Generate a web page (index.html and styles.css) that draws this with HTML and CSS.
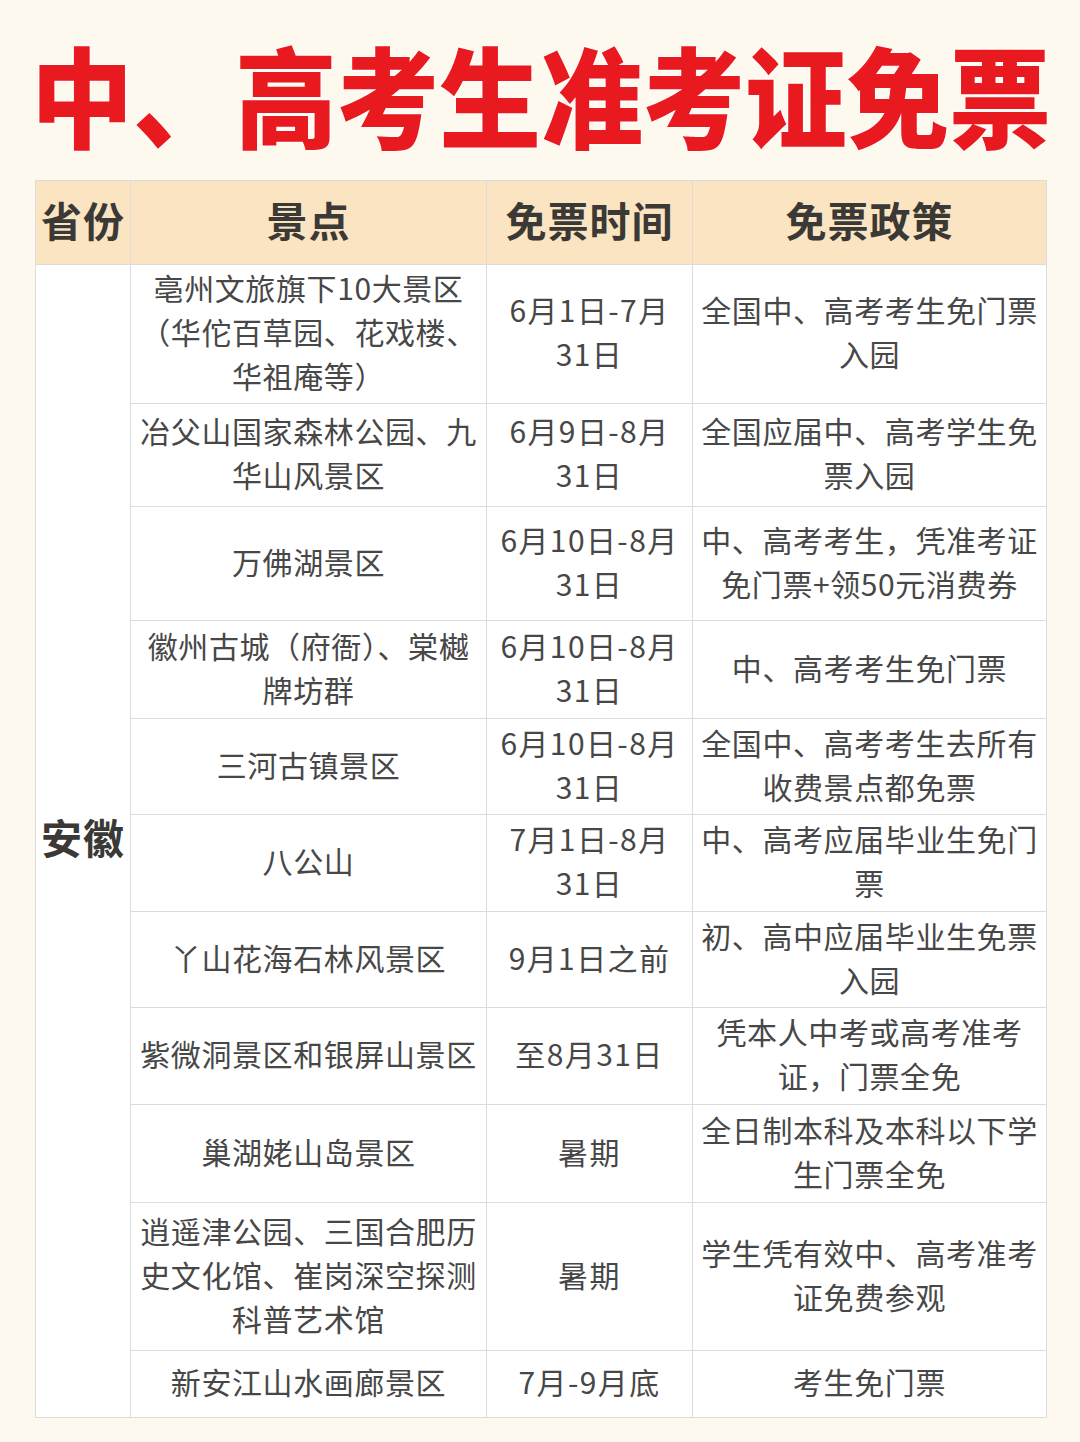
FILE: index.html
```html
<!DOCTYPE html>
<html lang="zh-CN">
<head>
<meta charset="utf-8">
<title>中、高考生准考证免票</title>
<link rel="stylesheet" href="styles.css">
</head>
<body>
<div class="page">
  <h1 class="title"><span class="title-text">中、高考生准考证免票</span></h1>
  <table class="grid">
    <colgroup>
      <col class="c-prov">
      <col class="c-spot">
      <col class="c-time">
      <col class="c-policy">
    </colgroup>
    <thead>
      <tr class="head">
        <th>省份</th>
        <th>景点</th>
        <th>免票时间</th>
        <th>免票政策</th>
      </tr>
    </thead>
    <tbody>
      <tr class="r1">
        <td class="prov" rowspan="11">安徽</td>
        <td>亳州文旅旗下10大景区<br>（华佗百草园、花戏楼、<br>华祖庵等）</td>
        <td class="time">6月1日-7月<br>31日</td>
        <td>全国中、高考考生免门票<br>入园</td>
      </tr>
      <tr class="r2">
        <td>冶父山国家森林公园、九<br>华山风景区</td>
        <td class="time">6月9日-8月<br>31日</td>
        <td>全国应届中、高考学生免<br>票入园</td>
      </tr>
      <tr class="r3">
        <td>万佛湖景区</td>
        <td class="time">6月10日-8月<br>31日</td>
        <td>中、高考考生，凭准考证<br>免门票+领50元消费券</td>
      </tr>
      <tr class="r4">
        <td>徽州古城（府衙）、棠樾<br>牌坊群</td>
        <td class="time">6月10日-8月<br>31日</td>
        <td>中、高考考生免门票</td>
      </tr>
      <tr class="r5">
        <td>三河古镇景区</td>
        <td class="time">6月10日-8月<br>31日</td>
        <td>全国中、高考考生去所有<br>收费景点都免票</td>
      </tr>
      <tr class="r6">
        <td>八公山</td>
        <td class="time">7月1日-8月<br>31日</td>
        <td>中、高考应届毕业生免门<br>票</td>
      </tr>
      <tr class="r7">
        <td>丫山花海石林风景区</td>
        <td class="time">9月1日之前</td>
        <td>初、高中应届毕业生免票<br>入园</td>
      </tr>
      <tr class="r8">
        <td>紫微洞景区和银屏山景区</td>
        <td class="time">至8月31日</td>
        <td>凭本人中考或高考准考<br>证，门票全免</td>
      </tr>
      <tr class="r9">
        <td>巢湖姥山岛景区</td>
        <td class="time">暑期</td>
        <td>全日制本科及本科以下学<br>生门票全免</td>
      </tr>
      <tr class="r10">
        <td>逍遥津公园、三国合肥历<br>史文化馆、崔岗深空探测<br>科普艺术馆</td>
        <td class="time">暑期</td>
        <td>学生凭有效中、高考准考<br>证免费参观</td>
      </tr>
      <tr class="r11">
        <td>新安江山水画廊景区</td>
        <td class="time">7月-9月底</td>
        <td>考生免门票</td>
      </tr>
    </tbody>
  </table>
</div>
</body>
</html>
```

FILE: styles.css
```css
html, body {
  margin: 0;
  padding: 0;
  background: #fdf9ee;
}

.page {
  width: 1080px;
  height: 1442px;
  background: #fdf9ee;
  font-family: "Noto Sans CJK SC", "Noto Sans", sans-serif;
  overflow: hidden;
}

.title {
  margin: 0;
  height: 180px;
  padding-left: 31px;
  box-sizing: border-box;
  display: flex;
  align-items: center;
  font-size: 102px;
  font-weight: 900;
  color: #e8191f;
  letter-spacing: 0;
  line-height: 1;
}

.title-text {
  display: inline-block;
  white-space: nowrap;
  transform: translateY(3px) scaleY(1.07);
  text-shadow: 0 0 3px #fff, 0 0 3px #fff, 0 0 2px #fff;
}

.grid {
  margin-left: 35px;
  width: 1011px;
  table-layout: fixed;
  border-collapse: collapse;
  background: #fff;
  color: #474747;
}

.c-prov { width: 95px; }
.c-spot { width: 356px; }
.c-time { width: 206px; }
.c-policy { width: 354px; }

.grid th,
.grid td {
  border: 1px solid #dcdcdc;
  padding: 0 4px 6px;
  text-align: center;
  vertical-align: middle;
  white-space: nowrap;
}

.grid th {
  background: #fae4c1;
  font-size: 41px;
  font-weight: 700;
  color: #3b3935;
  letter-spacing: 1px;
  line-height: 50px;
  padding-bottom: 8px;
}

.grid td {
  font-size: 30px;
  font-weight: 400;
  line-height: 44px;
  letter-spacing: 0.6px;
}

.grid td.time {
  letter-spacing: 1.4px;
}

.grid td.prov {
  font-size: 41px;
  font-weight: 700;
  color: #3b3935;
  letter-spacing: 1px;
  padding-bottom: 10px;
}

.head { height: 84px; }
.r1 { height: 138px; }
.r2 { height: 103px; }
.r3 { height: 114px; }
.r4 { height: 98px; }
.r5 { height: 96px; }
.r6 { height: 97px; }
.r7 { height: 96px; }
.r8 { height: 97px; }
.r9 { height: 98px; }
.r10 { height: 148px; }
.r11 { height: 67px; }
```
